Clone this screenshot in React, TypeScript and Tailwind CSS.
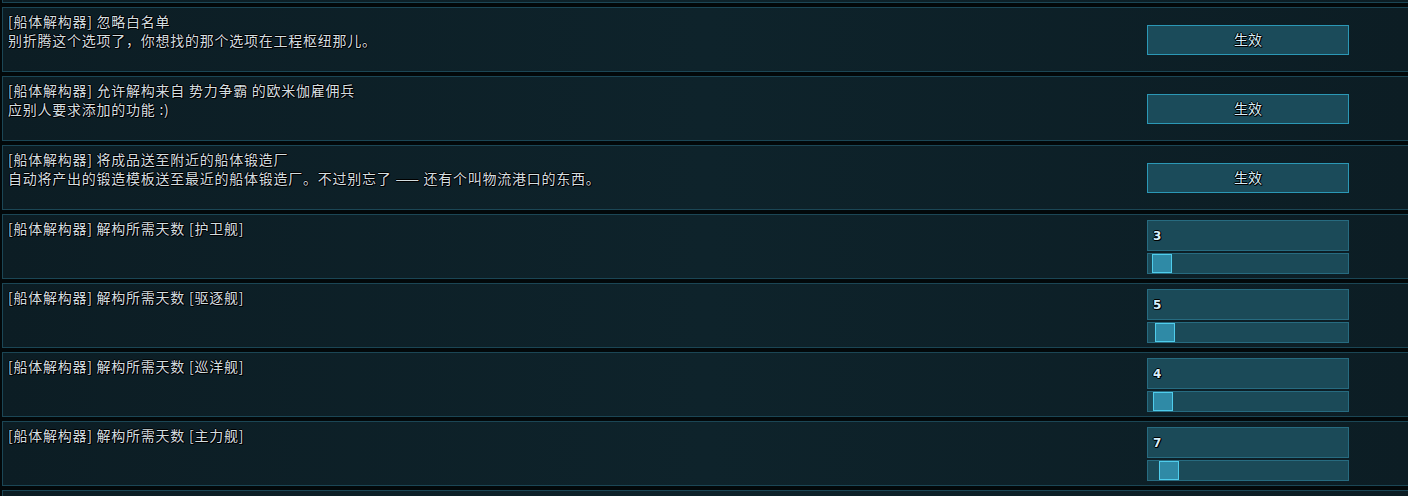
import React from "react";

type Row =
  | { kind: "toggle"; title: string; desc?: string }
  | { kind: "slider"; title: string; value: number };

const rows: Row[] = [
  {
    kind: "toggle",
    title: "[船体解构器] 忽略白名单",
    desc: "别折腾这个选项了，你想找的那个选项在工程枢纽那儿。",
  },
  {
    kind: "toggle",
    title: "[船体解构器] 允许解构来自 势力争霸 的欧米伽雇佣兵",
    desc: "应别人要求添加的功能 :)",
  },
  {
    kind: "toggle",
    title: "[船体解构器] 将成品送至附近的船体锻造厂",
    desc: "自动将产出的锻造模板送至最近的船体锻造厂。不过别忘了 —— 还有个叫物流港口的东西。",
  },
  { kind: "slider", title: "[船体解构器] 解构所需天数 [护卫舰]", value: 3 },
  { kind: "slider", title: "[船体解构器] 解构所需天数 [驱逐舰]", value: 5 },
  { kind: "slider", title: "[船体解构器] 解构所需天数 [巡洋舰]", value: 4 },
  { kind: "slider", title: "[船体解构器] 解构所需天数 [主力舰]", value: 7 },
];

const font = { fontFamily: '"Noto Sans CJK SC", "Noto Sans", sans-serif' };
const outline = {
  textShadow:
    "1px 0 0 #000, -1px 0 0 #000, 0 1px 0 #000, 0 -1px 0 #000, 1px 1px 0 #000",
};

function Panel({ children, className = "" }: { children?: React.ReactNode; className?: string }) {
  return (
    <div
      className={`ml-[2px] border border-r-0 border-[#1b4655] bg-gradient-to-r from-[#0c1d24] via-[#0e232b] to-[#0c1d24] ${className}`}
    >
      {children}
    </div>
  );
}

function ToggleButton() {
  return (
    <button className="w-[202px] h-[30px] border border-[#2b98b6] bg-[#1b4b5a] text-[14px] text-[#d6effb]" style={{ ...font, ...outline }}>
      生效
    </button>
  );
}

function SliderControl({ value }: { value: number }) {
  // range 1..100 across 180px of travel
  const left = ((value - 1) / 99) * 180;
  return (
    <div className="w-[202px] flex flex-col gap-[2px] pt-[1px]">
      <div className="h-[31px] border border-[#276b80] bg-[#1b4a58] pl-[5px] pt-[7px] text-[12px] font-bold leading-[16px] text-[#d6effb]" style={{ fontFamily: '"DejaVu Sans", sans-serif', ...outline }}>
        {value}
      </div>
      <div className="relative h-[21px] border border-[#276b80] bg-[#1b4a58]">
        <div
          className="absolute top-0 bottom-0 w-[20px] border border-[#4fcdec] bg-[#2f8aa6]"
          style={{ left }}
        />
      </div>
    </div>
  );
}

export default function App() {
  return (
    <div className="w-[1408px] h-[496px] overflow-hidden bg-[#02080a] flex flex-col gap-[4px]" style={font}>
      <Panel className="h-[3px] shrink-0 border-t-0" />
      {rows.map((r, i) => (
        <Panel key={i} className="h-[65px] shrink-0 flex">
          <div className="flex-1 pl-[5px] pt-[4px] text-[14px] leading-[19px] tracking-[0.75px] text-[#d3dee1]" style={outline}>
            <div>{r.title}</div>
            {r.kind === "toggle" && r.desc && <div>{r.desc}</div>}
          </div>
          <div className="mr-[59px] flex items-center">
            {r.kind === "toggle" ? <ToggleButton /> : <SliderControl value={r.value} />}
          </div>
        </Panel>
      ))}
      <Panel className="h-[20px] shrink-0" />
    </div>
  );
}
